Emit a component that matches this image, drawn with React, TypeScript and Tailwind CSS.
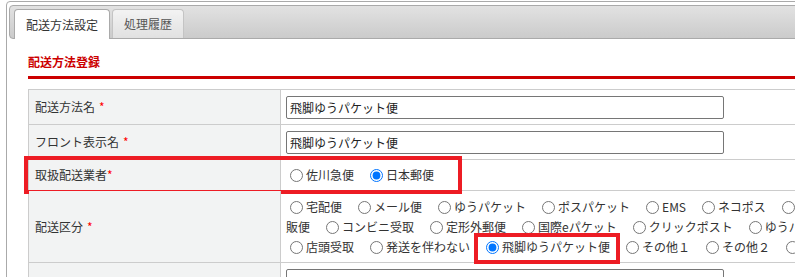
import React from 'react';

type RadioProps = { label: string; name: string; checked?: boolean; marked?: boolean };

const Radio = ({ label, name, checked, marked }: RadioProps) => (
  <label className="relative inline-flex items-center h-[20px] mr-[12px] whitespace-nowrap">
    <input
      type="radio"
      name={name}
      defaultChecked={checked}
      className="ml-[4px] mr-[3px] w-[13px] h-[13px]"
    />
    {label}
    {/* red highlight around the picked option */}
    {marked && (
      <span className="absolute left-[-8px] right-[-10px] top-[-4px] bottom-[-7px] border-4 border-[#ed1c24]" />
    )}
  </label>
);

type RowProps = {
  label?: string;
  required?: boolean;
  tight?: boolean;
  className: string;
  children?: React.ReactNode;
};

const Row = ({ label, required, tight, className, children }: RowProps) => (
  <div className={`relative flex border-b border-[#cccccc] ${className}`}>
    <div className="w-[252px] shrink-0 flex items-center pl-[6px] bg-[#f2f3f3] border-r border-[#cccccc]">
      <span>{label}</span>
      {required && <span className={tight ? 'text-[#ff0000]' : 'ml-[4px] text-[#ff0000]'}>*</span>}
    </div>
    <div className="flex-1 flex items-center pl-[5px]">{children}</div>
  </div>
);

const TextBox = ({ value }: { value: string }) => (
  <input
    type="text"
    defaultValue={value}
    className="w-[438px] h-[23px] border border-[#767676] rounded-[2px] pl-[3px] bg-white text-[#222222]"
  />
);

const App = () => {
  return (
    <div className="h-[277px] overflow-hidden bg-white pt-[1px] pl-[6px] font-['Noto_Sans_CJK_JP',sans-serif] text-[12px] leading-[16px] text-[#333333]">
      <div className="w-[1100px] border border-[#aaaaaa] rounded-[4px] pt-[3px] pl-[2px] pb-4">
        {/* Tabs */}
        <div className="h-[34px] flex items-end gap-[2px] pl-[4px] border border-[#aaaaaa] rounded-[4px] bg-linear-to-b from-[#e2e2e2] to-[#cbcbcb]">
          <div className="h-[30px] -mb-px flex items-center px-[11px] bg-white border border-b-0 border-[#aaaaaa] rounded-t-[4px] text-[#333333]">
            配送方法設定
          </div>
          <div className="h-[29px] flex items-center px-[11px] bg-linear-to-b from-[#f3f3f3] to-[#e1e1e1] border border-b-0 border-[#c4c4c4] rounded-t-[4px] text-[#555555]">
            処理履歴
          </div>
        </div>

        {/* Panel */}
        <div className="pl-[19px]">
          <h2 className="mt-[15px] pb-[6px] border-b-[3px] border-[#cc0000] text-[#cc0000] font-bold">
            配送方法登録
          </h2>

          <div className="mt-[10px] border-t border-l border-[#cccccc]">
            <Row label="配送方法名" required className="h-[35px]">
              <TextBox value="飛脚ゆうパケット便" />
            </Row>
            <Row label="フロント表示名" required className="h-[35px]">
              <TextBox value="飛脚ゆうパケット便" />
            </Row>
            <Row label="取扱配送業者" required tight className="h-[31px]">
              <Radio name="carrier" label="佐川急便" />
              <Radio name="carrier" label="日本郵便" checked />
              <span className="absolute left-[-5px] top-[-4px] w-[438px] h-[38px] border-4 border-[#ed1c24]" />
            </Row>
            <Row label="配送区分" required className="h-[72px]">
              <div className="flex flex-col pt-px">
                <div className="flex whitespace-nowrap">
                  <Radio name="kind" label="宅配便" />
                  <Radio name="kind" label="メール便" />
                  <Radio name="kind" label="ゆうパケット" />
                  <Radio name="kind" label="ポスパケット" />
                  <Radio name="kind" label="EMS" />
                  <Radio name="kind" label="ネコポス" />
                  <Radio name="kind" label="宅急便コンパクト" />
                  <Radio name="kind" label="通" />
                </div>
                <div className="flex whitespace-nowrap">
                  <span className="h-[20px] flex items-center mr-[12px]">販便</span>
                  <Radio name="kind" label="コンビニ受取" />
                  <Radio name="kind" label="定形外郵便" />
                  <Radio name="kind" label="国際eパケット" />
                  <Radio name="kind" label="クリックポスト" />
                  <Radio name="kind" label="ゆうパック" />
                  <Radio name="kind" label="レターパック" />
                </div>
                <div className="flex whitespace-nowrap">
                  <Radio name="kind" label="店頭受取" />
                  <Radio name="kind" label="発送を伴わない" />
                  <Radio name="kind" label="飛脚ゆうパケット便" checked marked />
                  <Radio name="kind" label="その他１" />
                  <Radio name="kind" label="その他２" />
                  <Radio name="kind" label="その他３" />
                </div>
              </div>
            </Row>
            <Row className="h-[35px]">
              <TextBox value="" />
            </Row>
          </div>
        </div>
      </div>
    </div>
  );
};

export default App;
